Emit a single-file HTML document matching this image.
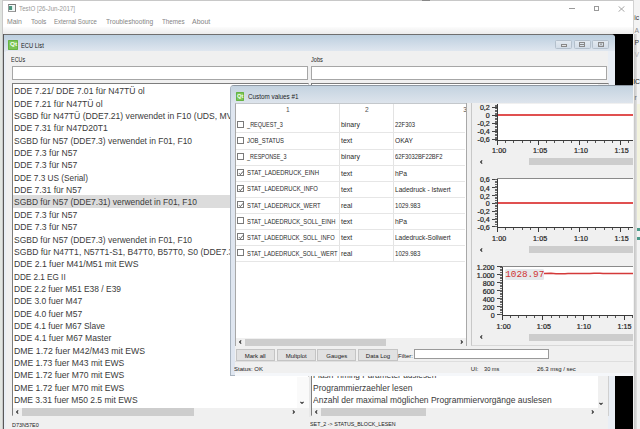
<!DOCTYPE html>
<html><head><meta charset="utf-8"><style>
html,body{margin:0;padding:0;}
body{width:640px;height:429px;overflow:hidden;position:relative;background:#fff;font-family:"Liberation Sans", sans-serif;}
.a{position:absolute;box-sizing:border-box;}
.t{position:absolute;white-space:pre;font-family:"Liberation Sans", sans-serif;}
</style></head><body>
<div class="a" style="left:0px;top:0px;width:640px;height:429px;background:#fff"></div>
<div class="a" style="left:0px;top:0px;width:640px;height:1px;background:#c8c8c8"></div>
<div class="a" style="left:422px;top:0px;width:8px;height:1px;background:#888"></div>
<div class="a" style="left:0px;top:0px;width:2px;height:429px;background:#e1e5e1"></div>
<div class="a" style="left:2px;top:0px;width:1px;height:429px;background:#c8c8c8"></div>
<div class="a" style="left:7.8px;top:4px;width:8px;height:7.5px;border:1px solid #9a9a9a;border-top:1.5px solid #777;border-right-color:#808080;background:#f4f8f8"></div>
<div class="a" style="left:8.9px;top:5.6px;width:3px;height:4.6px;background:#4a957e"></div>
<div class="a" style="left:11.9px;top:5.6px;width:2.4px;height:4.6px;background:linear-gradient(90deg,#d6efe8,#f4f8f8)"></div>
<div class="t" style="left:19.29px;top:5.84px;font-size:6.8px;line-height:6.8px;color:#999;transform:scaleX(0.9099);transform-origin:0.41px 0;">TestO [26-Jun-2017]</div>
<div class="a" style="left:568.8px;top:8px;width:6.2px;height:0.9px;background:#9a9a9a"></div>
<div class="a" style="left:593.8px;top:5.5px;width:5.6px;height:5.6px;border:0.9px solid #9a9a9a"></div>
<svg class="a" style="left:617.5px;top:5.5px" width="7" height="6" viewBox="0 0 7 6"><path d="M0.5 0.3L6.5 5.7M6.5 0.3L0.5 5.7" stroke="#9a9a9a" stroke-width="0.85"/></svg>
<div class="t" style="left:7.49px;top:19.44px;font-size:6.8px;line-height:6.8px;color:#858585;transform:scaleX(1.0130);transform-origin:0.41px 0;">Main</div>
<div class="t" style="left:30.59px;top:19.44px;font-size:6.8px;line-height:6.8px;color:#858585;transform:scaleX(0.9695);transform-origin:0.41px 0;">Tools</div>
<div class="t" style="left:54.39px;top:19.44px;font-size:6.8px;line-height:6.8px;color:#858585;transform:scaleX(0.8876);transform-origin:0.41px 0;">External Source</div>
<div class="t" style="left:105.79px;top:19.44px;font-size:6.8px;line-height:6.8px;color:#858585;transform:scaleX(0.9710);transform-origin:0.41px 0;">Troubleshooting</div>
<div class="t" style="left:161.59px;top:19.44px;font-size:6.8px;line-height:6.8px;color:#858585;transform:scaleX(0.9222);transform-origin:0.41px 0;">Themes</div>
<div class="t" style="left:192.49px;top:19.44px;font-size:6.8px;line-height:6.8px;color:#858585;transform:scaleX(1.0266);transform-origin:0.41px 0;">About</div>
<div class="a" style="left:3px;top:27px;width:631px;height:7px;background:linear-gradient(#fcfcfc,#ececec)"></div>
<div class="a" style="left:3px;top:34px;width:630px;height:395px;background:#000"></div>
<div class="a" style="left:3px;top:34px;width:611.5px;height:400px;background:#e9eef5;border-top:1px solid #6f6f6f;border-left:1px solid #585858;border-top-right-radius:4px"></div>
<div class="a" style="left:4px;top:35px;width:610.5px;height:16px;background:linear-gradient(#bccfdf,#dfe6ef);border-top-right-radius:3px"></div>
<div class="a" style="left:4px;top:50.5px;width:604px;height:1px;background:#e2e8f0"></div>
<div class="a" style="left:5.5px;top:51px;width:602px;height:378px;background:#f0f0f0"></div>
<div class="a" style="left:8.4px;top:40.4px;width:9.5px;height:9.2px;background:#7cc557;box-shadow:inset 0 0 0 0.8px #5fae3e;border-radius:1.2px"></div>
<div class="t" style="left:9.86px;top:42.26px;font-size:5.6px;line-height:5.6px;color:#f4fff0;transform:scaleX(1.1463);transform-origin:0.34px 0;font-weight:bold">Qt</div>
<div class="t" style="left:20.62px;top:42.78px;font-size:6.4px;line-height:6.4px;color:#1a1a1a;transform:scaleX(0.8998);transform-origin:0.38px 0;">ECU List</div>
<div class="a" style="left:555.3px;top:39.7px;width:16.8px;height:9px;border:1px solid #b4c0cc;border-radius:1.5px;background:linear-gradient(#e2e9f0,#d3dde8)"></div>
<div class="a" style="left:573.9px;top:39.7px;width:16.8px;height:9px;border:1px solid #b4c0cc;border-radius:1.5px;background:linear-gradient(#e2e9f0,#d3dde8)"></div>
<div class="a" style="left:592.3px;top:39.7px;width:16.8px;height:9px;border:1px solid #b4c0cc;border-radius:1.5px;background:linear-gradient(#e2e9f0,#d3dde8)"></div>
<div class="a" style="left:561px;top:44.2px;width:5.6px;height:2.4px;border:0.8px solid #888;background:#e4e4e4"></div>
<div class="a" style="left:579.2px;top:42.1px;width:5.8px;height:4.6px;border:0.8px solid #888"></div>
<div class="a" style="left:580px;top:44px;width:4.2px;height:0.7px;background:#888"></div>
<div class="a" style="left:597.5px;top:42.1px;width:6px;height:4.6px;border:0.8px solid #888"></div>
<svg class="a" style="left:597.5px;top:42.1px" width="6" height="4.6" viewBox="0 0 6 4.6"><path d="M1.5 1L4.5 3.6M4.5 1L1.5 3.6" stroke="#888" stroke-width="0.7"/></svg>
<div class="t" style="left:11.32px;top:57.38px;font-size:6.4px;line-height:6.4px;color:#1c1c1c;transform:scaleX(0.8409);transform-origin:0.38px 0;">ECUs</div>
<div class="t" style="left:310.62px;top:57.48px;font-size:6.4px;line-height:6.4px;color:#1c1c1c;transform:scaleX(0.8797);transform-origin:0.38px 0;">Jobs</div>
<div class="a" style="left:12px;top:66px;width:296px;height:13.7px;background:#fff;border:1px solid #a6a6a6"></div>
<div class="a" style="left:311px;top:66px;width:295.7px;height:13.7px;background:#fff;border:1px solid #a6a6a6"></div>
<div class="a" style="left:12px;top:83.3px;width:296.5px;height:333.2px;background:#fff;border:1px solid #7d7d7d;border-right-color:#d0d0d0;border-bottom-color:#d0d0d0"></div>
<div class="a" style="left:13px;top:194.8px;width:294px;height:13.2px;background:#dcdcdc"></div>
<div class="a" style="left:13px;top:84px;width:294px;height:324px;overflow:hidden">
<div class="t" style="left:1.44px;top:2.34px;font-size:9.4px;line-height:9.4px;color:#3a3a3a;transform:scaleX(0.9176);transform-origin:0.56px 0;">DDE 7.21/ DDE 7.01 für N47TÜ ol</div>
<div class="t" style="left:1.44px;top:14.69px;font-size:9.4px;line-height:9.4px;color:#3a3a3a;transform:scaleX(0.9184);transform-origin:0.56px 0;">DDE 7.21 für N47TÜ ol</div>
<div class="t" style="left:1.44px;top:27.04px;font-size:9.4px;line-height:9.4px;color:#3a3a3a;transform:scaleX(0.915);transform-origin:0.5px 0">SGBD für N47TÜ (DDE7.21) verwendet in F10 (UDS, MV</div>
<div class="t" style="left:1.44px;top:39.39px;font-size:9.4px;line-height:9.4px;color:#3a3a3a;transform:scaleX(0.9187);transform-origin:0.56px 0;">DDE 7.31 für N47D20T1</div>
<div class="t" style="left:1.44px;top:51.74px;font-size:9.4px;line-height:9.4px;color:#3a3a3a;transform:scaleX(0.9014);transform-origin:0.56px 0;">SGBD für N57 (DDE7.3) verwendet in F01, F10</div>
<div class="t" style="left:1.44px;top:64.09px;font-size:9.4px;line-height:9.4px;color:#3a3a3a;transform:scaleX(0.9209);transform-origin:0.56px 0;">DDE 7.3 für N57</div>
<div class="t" style="left:1.44px;top:76.44px;font-size:9.4px;line-height:9.4px;color:#3a3a3a;transform:scaleX(0.9209);transform-origin:0.56px 0;">DDE 7.3 für N57</div>
<div class="t" style="left:1.44px;top:88.79px;font-size:9.4px;line-height:9.4px;color:#3a3a3a;transform:scaleX(0.8808);transform-origin:0.56px 0;">DDE 7.3 US (Serial)</div>
<div class="t" style="left:1.44px;top:101.14px;font-size:9.4px;line-height:9.4px;color:#3a3a3a;transform:scaleX(0.9167);transform-origin:0.56px 0;">DDE 7.31 für N57</div>
<div class="t" style="left:1.44px;top:113.49px;font-size:9.4px;line-height:9.4px;color:#3a3a3a;transform:scaleX(0.9019);transform-origin:0.56px 0;">SGBD für N57 (DDE7.31) verwendet in F01, F10</div>
<div class="t" style="left:1.44px;top:125.84px;font-size:9.4px;line-height:9.4px;color:#3a3a3a;transform:scaleX(0.9209);transform-origin:0.56px 0;">DDE 7.3 für N57</div>
<div class="t" style="left:1.44px;top:138.19px;font-size:9.4px;line-height:9.4px;color:#3a3a3a;transform:scaleX(0.9209);transform-origin:0.56px 0;">DDE 7.3 für N57</div>
<div class="t" style="left:1.44px;top:150.54px;font-size:9.4px;line-height:9.4px;color:#3a3a3a;transform:scaleX(0.9014);transform-origin:0.56px 0;">SGBD für N57 (DDE7.3) verwendet in F01, F10</div>
<div class="t" style="left:1.44px;top:162.89px;font-size:9.4px;line-height:9.4px;color:#3a3a3a;transform:scaleX(0.915);transform-origin:0.5px 0">SGBD für N47T1, N57T1-S1, B47T0, B57T0, S0 (DDE7.3</div>
<div class="t" style="left:1.44px;top:175.24px;font-size:9.4px;line-height:9.4px;color:#3a3a3a;transform:scaleX(0.9222);transform-origin:0.56px 0;">DDE 2.1 fuer M41/M51 mit EWS</div>
<div class="t" style="left:1.44px;top:187.59px;font-size:9.4px;line-height:9.4px;color:#3a3a3a;transform:scaleX(0.8682);transform-origin:0.56px 0;">DDE 2.1 EG II</div>
<div class="t" style="left:1.44px;top:199.94px;font-size:9.4px;line-height:9.4px;color:#3a3a3a;transform:scaleX(0.9006);transform-origin:0.56px 0;">DDE 2.2 fuer M51 E38 / E39</div>
<div class="t" style="left:1.44px;top:212.29px;font-size:9.4px;line-height:9.4px;color:#3a3a3a;transform:scaleX(0.9078);transform-origin:0.56px 0;">DDE 3.0 fuer M47</div>
<div class="t" style="left:1.44px;top:224.64px;font-size:9.4px;line-height:9.4px;color:#3a3a3a;transform:scaleX(0.9078);transform-origin:0.56px 0;">DDE 4.0 fuer M57</div>
<div class="t" style="left:1.44px;top:236.99px;font-size:9.4px;line-height:9.4px;color:#3a3a3a;transform:scaleX(0.9003);transform-origin:0.56px 0;">DDE 4.1 fuer M67 Slave</div>
<div class="t" style="left:1.44px;top:249.34px;font-size:9.4px;line-height:9.4px;color:#3a3a3a;transform:scaleX(0.9152);transform-origin:0.56px 0;">DDE 4.1 fuer M67 Master</div>
<div class="t" style="left:1.44px;top:261.69px;font-size:9.4px;line-height:9.4px;color:#3a3a3a;transform:scaleX(0.9281);transform-origin:0.56px 0;">DME 1.72 fuer M42/M43 mit EWS</div>
<div class="t" style="left:1.44px;top:274.04px;font-size:9.4px;line-height:9.4px;color:#3a3a3a;transform:scaleX(0.9163);transform-origin:0.56px 0;">DME 1.73 fuer M43 mit EWS</div>
<div class="t" style="left:1.44px;top:286.39px;font-size:9.4px;line-height:9.4px;color:#3a3a3a;transform:scaleX(0.9163);transform-origin:0.56px 0;">DME 1.72 fuer M70 mit EWS</div>
<div class="t" style="left:1.44px;top:298.74px;font-size:9.4px;line-height:9.4px;color:#3a3a3a;transform:scaleX(0.9163);transform-origin:0.56px 0;">DME 1.72 fuer M70 mit EWS</div>
<div class="t" style="left:1.44px;top:311.09px;font-size:9.4px;line-height:9.4px;color:#3a3a3a;transform:scaleX(0.9084);transform-origin:0.56px 0;">DME 3.31 fuer M50 2.5 mit EWS</div>
</div>
<div class="a" style="left:13px;top:407.8px;width:284px;height:8.2px;background:#f0f0f0"></div>
<div class="a" style="left:22px;top:408px;width:172px;height:7.5px;background:#cdcdcd"></div>
<div class="a" style="left:297px;top:377px;width:12px;height:31px;background:#fafafa"></div>
<div class="a" style="left:309px;top:377px;width:2px;height:40px;background:#e8e8e8"></div>
<div class="a" style="left:297px;top:408px;width:12px;height:9px;background:#f0f0f0"></div>
<svg class="a" style="left:15.70px;top:410.20px" width="3" height="4" viewBox="0 0 3 4"><path d="M2.2 0.4L0.6 2L2.2 3.6" stroke="#333" stroke-width="1.1" fill="none"/></svg>
<svg class="a" style="left:291.80px;top:410.20px" width="3" height="4" viewBox="0 0 3 4"><path d="M0.8 0.4L2.4 2L0.8 3.6" stroke="#333" stroke-width="1.1" fill="none"/></svg>
<svg class="a" style="left:300.00px;top:401.00px" width="4" height="3" viewBox="0 0 4 3"><path d="M0.4 0.8L2 2.4L3.6 0.8" stroke="#333" stroke-width="1.1" fill="none"/></svg>
<div class="a" style="left:311px;top:83.3px;width:298px;height:333px;background:#fff;border:1px solid #7d7d7d;border-right-color:#d0d0d0;border-bottom-color:#d0d0d0"></div>
<div class="a" style="left:312px;top:84px;width:285.5px;height:323.5px;overflow:hidden">
<div class="t" style="left:1.14px;top:286.39px;font-size:9.4px;line-height:9.4px;color:#3a3a3a;transform:scaleX(0.8821);transform-origin:0.56px 0;">Flash Timing Parameter auslesen</div>
<div class="t" style="left:1.14px;top:298.74px;font-size:9.4px;line-height:9.4px;color:#3a3a3a;transform:scaleX(0.9033);transform-origin:0.56px 0;">Programmierzaehler lesen</div>
<div class="t" style="left:1.14px;top:311.09px;font-size:9.4px;line-height:9.4px;color:#3a3a3a;transform:scaleX(0.9050);transform-origin:0.56px 0;">Anzahl der maximal möglichen Programmiervorgänge auslesen</div>
</div>
<div class="a" style="left:312px;top:407.5px;width:285.5px;height:8.5px;background:#f0f0f0"></div>
<div class="a" style="left:321.3px;top:408px;width:104.7px;height:7.5px;background:#cdcdcd"></div>
<div class="a" style="left:597.5px;top:84px;width:10.5px;height:332px;background:#f0f0f0"></div>
<svg class="a" style="left:314.50px;top:410.20px" width="3" height="4" viewBox="0 0 3 4"><path d="M2.2 0.4L0.6 2L2.2 3.6" stroke="#333" stroke-width="1.1" fill="none"/></svg>
<svg class="a" style="left:590.50px;top:410.00px" width="3" height="4" viewBox="0 0 3 4"><path d="M0.8 0.4L2.4 2L0.8 3.6" stroke="#333" stroke-width="1.1" fill="none"/></svg>
<svg class="a" style="left:599.00px;top:401.50px" width="4" height="3" viewBox="0 0 4 3"><path d="M0.4 0.8L2 2.4L3.6 0.8" stroke="#333" stroke-width="1.1" fill="none"/></svg>
<div class="t" style="left:11.63px;top:421.55px;font-size:6.2px;line-height:6.2px;color:#1a1a1a;transform:scaleX(0.8802);transform-origin:0.37px 0;">D73N57E0</div>
<div class="t" style="left:309.93px;top:421.25px;font-size:6.2px;line-height:6.2px;color:#1a1a1a;transform:scaleX(0.8592);transform-origin:0.37px 0;">SET_2 -> STATUS_BLOCK_LESEN</div>
<div class="a" style="left:230px;top:84.6px;width:410px;height:291.9px;background:#dfe6f0;border:1px solid #a9b4c0;border-top-color:#8e98a2;border-top-left-radius:4px"></div>
<div class="a" style="left:231px;top:85.6px;width:402.5px;height:17.5px;background:linear-gradient(#c4d3e0,#dde4ec);border-top-left-radius:3px"></div>
<div class="a" style="left:235px;top:103px;width:398.5px;height:272.5px;background:#f0f0f0"></div>
<div class="a" style="left:235.8px;top:92px;width:8.4px;height:8.6px;background:#7cc557;box-shadow:inset 0 0 0 0.8px #5fae3e;border-radius:1.2px"></div>
<div class="t" style="left:237.09px;top:93.90px;font-size:5.2px;line-height:5.2px;color:#f4fff0;transform:scaleX(1.1110);transform-origin:0.31px 0;font-weight:bold">Qt</div>
<div class="t" style="left:247.50px;top:94.23px;font-size:6.7px;line-height:6.7px;color:#1c1c1c;transform:scaleX(0.9426);transform-origin:0.40px 0;">Custom values #1</div>
<div class="a" style="left:235.3px;top:103.3px;width:231.7px;height:243px;background:#fff;border:1px solid #a8a8a8;border-top-color:#c4c8cc"></div>
<div class="a" style="left:338.9px;top:104px;width:1px;height:157px;background:#e3e3e3"></div>
<div class="a" style="left:392.5px;top:104px;width:1px;height:157px;background:#e3e3e3"></div>
<div class="t" style="left:285.90px;top:107.41px;font-size:6.6px;line-height:6.6px;color:#505050;">1</div>
<div class="t" style="left:364.90px;top:107.41px;font-size:6.6px;line-height:6.6px;color:#505050;">2</div>
<div class="t" style="left:463.20px;top:107.41px;font-size:6.6px;line-height:6.6px;color:#505050;">3</div>
<div class="a" style="left:466px;top:103.3px;width:4.8px;height:243px;background:#f0f0f0;border-left:1px solid #a8a8a8"></div>
<div class="a" style="left:236px;top:132.48000000000002px;width:229px;height:1px;background:#e6e6e6"></div>
<div class="a" style="left:237.2px;top:120.80000000000001px;width:7px;height:7px;background:#fff;border:1px solid #7a7a7a"></div>
<div class="t" style="left:247.10px;top:122.13px;font-size:6.7px;line-height:6.7px;color:#2a2a2a;transform:scaleX(0.8244);transform-origin:0.40px 0;">_REQUEST_3</div>
<div class="t" style="left:341.11px;top:122.30px;font-size:6.5px;line-height:6.5px;color:#2a2a2a;transform:scaleX(1.0745);transform-origin:0.39px 0;">binary</div>
<div class="t" style="left:394.61px;top:122.30px;font-size:6.5px;line-height:6.5px;color:#2a2a2a;transform:scaleX(0.9028);transform-origin:0.39px 0;">22F303</div>
<div class="a" style="left:236px;top:148.56px;width:229px;height:1px;background:#e6e6e6"></div>
<div class="a" style="left:237.2px;top:136.88000000000002px;width:7px;height:7px;background:#fff;border:1px solid #7a7a7a"></div>
<div class="t" style="left:247.10px;top:138.21px;font-size:6.7px;line-height:6.7px;color:#2a2a2a;transform:scaleX(0.8761);transform-origin:0.40px 0;">JOB_STATUS</div>
<div class="t" style="left:341.11px;top:138.38px;font-size:6.5px;line-height:6.5px;color:#2a2a2a;transform:scaleX(1.0820);transform-origin:0.39px 0;">text</div>
<div class="t" style="left:394.61px;top:138.38px;font-size:6.5px;line-height:6.5px;color:#2a2a2a;transform:scaleX(1.0170);transform-origin:0.39px 0;">OKAY</div>
<div class="a" style="left:236px;top:164.64px;width:229px;height:1px;background:#e6e6e6"></div>
<div class="a" style="left:237.2px;top:152.96px;width:7px;height:7px;background:#fff;border:1px solid #7a7a7a"></div>
<div class="t" style="left:247.10px;top:154.29px;font-size:6.7px;line-height:6.7px;color:#2a2a2a;transform:scaleX(0.8143);transform-origin:0.40px 0;">_RESPONSE_3</div>
<div class="t" style="left:341.11px;top:154.46px;font-size:6.5px;line-height:6.5px;color:#2a2a2a;transform:scaleX(1.0745);transform-origin:0.39px 0;">binary</div>
<div class="t" style="left:394.61px;top:154.46px;font-size:6.5px;line-height:6.5px;color:#2a2a2a;transform:scaleX(0.8941);transform-origin:0.39px 0;">62F3032BF22BF2</div>
<div class="a" style="left:236px;top:180.71999999999997px;width:229px;height:1px;background:#e6e6e6"></div>
<div class="a" style="left:237.2px;top:169.04px;width:7px;height:7px;background:#fff;border:1px solid #7a7a7a"></div>
<svg class="a" style="left:237.7px;top:169.54px" width="6" height="6" viewBox="0 0 6 6"><path d="M1 3.2L2.4 4.6L5.1 1.3" stroke="#333" stroke-width="0.8" fill="none"/></svg>
<div class="t" style="left:247.10px;top:170.37px;font-size:6.7px;line-height:6.7px;color:#2a2a2a;transform:scaleX(0.8904);transform-origin:0.40px 0;">STAT_LADEDRUCK_EINH</div>
<div class="t" style="left:341.11px;top:170.54px;font-size:6.5px;line-height:6.5px;color:#2a2a2a;transform:scaleX(1.0820);transform-origin:0.39px 0;">text</div>
<div class="t" style="left:394.61px;top:170.54px;font-size:6.5px;line-height:6.5px;color:#2a2a2a;transform:scaleX(1.0372);transform-origin:0.39px 0;">hPa</div>
<div class="a" style="left:236px;top:196.8px;width:229px;height:1px;background:#e6e6e6"></div>
<div class="a" style="left:237.2px;top:185.12px;width:7px;height:7px;background:#fff;border:1px solid #7a7a7a"></div>
<svg class="a" style="left:237.7px;top:185.62px" width="6" height="6" viewBox="0 0 6 6"><path d="M1 3.2L2.4 4.6L5.1 1.3" stroke="#333" stroke-width="0.8" fill="none"/></svg>
<div class="t" style="left:247.10px;top:186.45px;font-size:6.7px;line-height:6.7px;color:#2a2a2a;transform:scaleX(0.8767);transform-origin:0.40px 0;">STAT_LADEDRUCK_INFO</div>
<div class="t" style="left:341.11px;top:186.62px;font-size:6.5px;line-height:6.5px;color:#2a2a2a;transform:scaleX(1.0820);transform-origin:0.39px 0;">text</div>
<div class="t" style="left:394.61px;top:186.62px;font-size:6.5px;line-height:6.5px;color:#2a2a2a;transform:scaleX(1.0073);transform-origin:0.39px 0;">Ladedruck - Istwert</div>
<div class="a" style="left:236px;top:212.88px;width:229px;height:1px;background:#e6e6e6"></div>
<div class="a" style="left:237.2px;top:201.20000000000002px;width:7px;height:7px;background:#fff;border:1px solid #7a7a7a"></div>
<svg class="a" style="left:237.7px;top:201.70px" width="6" height="6" viewBox="0 0 6 6"><path d="M1 3.2L2.4 4.6L5.1 1.3" stroke="#333" stroke-width="0.8" fill="none"/></svg>
<div class="t" style="left:247.10px;top:202.53px;font-size:6.7px;line-height:6.7px;color:#2a2a2a;transform:scaleX(0.8725);transform-origin:0.40px 0;">STAT_LADEDRUCK_WERT</div>
<div class="t" style="left:341.11px;top:202.70px;font-size:6.5px;line-height:6.5px;color:#2a2a2a;transform:scaleX(1.0433);transform-origin:0.39px 0;">real</div>
<div class="t" style="left:394.61px;top:202.70px;font-size:6.5px;line-height:6.5px;color:#2a2a2a;transform:scaleX(0.9300);transform-origin:0.39px 0;">1029.983</div>
<div class="a" style="left:236px;top:228.95999999999998px;width:229px;height:1px;background:#e6e6e6"></div>
<div class="a" style="left:237.2px;top:217.28px;width:7px;height:7px;background:#fff;border:1px solid #7a7a7a"></div>
<div class="t" style="left:247.10px;top:218.61px;font-size:6.7px;line-height:6.7px;color:#2a2a2a;transform:scaleX(0.8691);transform-origin:0.40px 0;">STAT_LADEDRUCK_SOLL_EINH</div>
<div class="t" style="left:341.11px;top:218.78px;font-size:6.5px;line-height:6.5px;color:#2a2a2a;transform:scaleX(1.0820);transform-origin:0.39px 0;">text</div>
<div class="t" style="left:394.61px;top:218.78px;font-size:6.5px;line-height:6.5px;color:#2a2a2a;transform:scaleX(1.0372);transform-origin:0.39px 0;">hPa</div>
<div class="a" style="left:236px;top:245.03999999999996px;width:229px;height:1px;background:#e6e6e6"></div>
<div class="a" style="left:237.2px;top:233.35999999999999px;width:7px;height:7px;background:#fff;border:1px solid #7a7a7a"></div>
<svg class="a" style="left:237.7px;top:233.86px" width="6" height="6" viewBox="0 0 6 6"><path d="M1 3.2L2.4 4.6L5.1 1.3" stroke="#333" stroke-width="0.8" fill="none"/></svg>
<div class="t" style="left:247.10px;top:234.69px;font-size:6.7px;line-height:6.7px;color:#2a2a2a;transform:scaleX(0.8623);transform-origin:0.40px 0;">STAT_LADEDRUCK_SOLL_INFO</div>
<div class="t" style="left:341.11px;top:234.86px;font-size:6.5px;line-height:6.5px;color:#2a2a2a;transform:scaleX(1.0820);transform-origin:0.39px 0;">text</div>
<div class="t" style="left:394.61px;top:234.86px;font-size:6.5px;line-height:6.5px;color:#2a2a2a;transform:scaleX(1.0007);transform-origin:0.39px 0;">Ladedruck-Sollwert</div>
<div class="a" style="left:236px;top:261.12px;width:229px;height:1px;background:#e6e6e6"></div>
<div class="a" style="left:237.2px;top:249.44px;width:7px;height:7px;background:#fff;border:1px solid #7a7a7a"></div>
<div class="t" style="left:247.10px;top:250.77px;font-size:6.7px;line-height:6.7px;color:#2a2a2a;transform:scaleX(0.8595);transform-origin:0.40px 0;">STAT_LADEDRUCK_SOLL_WERT</div>
<div class="t" style="left:341.11px;top:250.94px;font-size:6.5px;line-height:6.5px;color:#2a2a2a;transform:scaleX(1.0433);transform-origin:0.39px 0;">real</div>
<div class="t" style="left:394.61px;top:250.94px;font-size:6.5px;line-height:6.5px;color:#2a2a2a;transform:scaleX(0.9300);transform-origin:0.39px 0;">1029.983</div>
<div class="a" style="left:236px;top:338.2px;width:230px;height:8px;background:#f0f0f0"></div>
<div class="a" style="left:244.7px;top:338.5px;width:141.3px;height:7.5px;background:#cdcdcd"></div>
<svg class="a" style="left:238.50px;top:340.30px" width="3" height="4" viewBox="0 0 3 4"><path d="M2.2 0.4L0.6 2L2.2 3.6" stroke="#333" stroke-width="1.1" fill="none"/></svg>
<svg class="a" style="left:460.00px;top:340.20px" width="3" height="4" viewBox="0 0 3 4"><path d="M0.8 0.4L2.4 2L0.8 3.6" stroke="#333" stroke-width="1.1" fill="none"/></svg>
<div class="a" style="left:470.8px;top:103.4px;width:170px;height:243px;background:#f0f0f0;border-left:1px solid #c8c8c8;border-bottom:1px solid #d8d8d8"></div>
<div class="a" style="left:497.4px;top:104px;width:135.60000000000002px;height:36px;background:#fff"></div>
<div class="a" style="left:496.79999999999995px;top:104px;width:1px;height:36.6px;background:#3a3a3a"></div>
<div class="a" style="left:496.79999999999995px;top:140px;width:136.20000000000002px;height:1px;background:#3a3a3a"></div>
<div class="a" style="left:497.9px;top:114.45px;width:135.60000000000002px;height:1.1px;background:#e05050"></div>
<div class="a" style="left:492.4px;top:106.6px;width:5px;height:0.8px;background:#444"></div>
<div class="t" style="left:457.4px;top:105.34px;width:32.4px;text-align:right;font-size:7.1px;line-height:6.8px;color:#252525;font-weight:normal;-webkit-text-stroke:0.22px #252525">0,2</div>
<div class="a" style="left:492.4px;top:114.6px;width:5px;height:0.8px;background:#444"></div>
<div class="t" style="left:457.4px;top:113.34px;width:32.4px;text-align:right;font-size:7.1px;line-height:6.8px;color:#252525;font-weight:normal;-webkit-text-stroke:0.22px #252525">0</div>
<div class="a" style="left:492.4px;top:122.6px;width:5px;height:0.8px;background:#444"></div>
<div class="t" style="left:457.4px;top:121.34px;width:32.4px;text-align:right;font-size:7.1px;line-height:6.8px;color:#252525;font-weight:normal;-webkit-text-stroke:0.22px #252525">-0,2</div>
<div class="a" style="left:492.4px;top:130.6px;width:5px;height:0.8px;background:#444"></div>
<div class="t" style="left:457.4px;top:129.34px;width:32.4px;text-align:right;font-size:7.1px;line-height:6.8px;color:#252525;font-weight:normal;-webkit-text-stroke:0.22px #252525">-0,4</div>
<div class="a" style="left:492.4px;top:138.6px;width:5px;height:0.8px;background:#444"></div>
<div class="t" style="left:457.4px;top:137.34px;width:32.4px;text-align:right;font-size:7.1px;line-height:6.8px;color:#252525;font-weight:normal;-webkit-text-stroke:0.22px #252525">-0,6</div>
<div class="a" style="left:494.79999999999995px;top:104.8px;width:2.6px;height:0.55px;background:#666"></div>
<div class="a" style="left:494.79999999999995px;top:106.39999999999999px;width:2.6px;height:0.55px;background:#666"></div>
<div class="a" style="left:494.79999999999995px;top:107.99999999999999px;width:2.6px;height:0.55px;background:#666"></div>
<div class="a" style="left:494.79999999999995px;top:109.59999999999998px;width:2.6px;height:0.55px;background:#666"></div>
<div class="a" style="left:494.79999999999995px;top:111.19999999999997px;width:2.6px;height:0.55px;background:#666"></div>
<div class="a" style="left:494.79999999999995px;top:112.79999999999997px;width:2.6px;height:0.55px;background:#666"></div>
<div class="a" style="left:494.79999999999995px;top:114.39999999999996px;width:2.6px;height:0.55px;background:#666"></div>
<div class="a" style="left:494.79999999999995px;top:115.99999999999996px;width:2.6px;height:0.55px;background:#666"></div>
<div class="a" style="left:494.79999999999995px;top:117.59999999999995px;width:2.6px;height:0.55px;background:#666"></div>
<div class="a" style="left:494.79999999999995px;top:119.19999999999995px;width:2.6px;height:0.55px;background:#666"></div>
<div class="a" style="left:494.79999999999995px;top:120.79999999999994px;width:2.6px;height:0.55px;background:#666"></div>
<div class="a" style="left:494.79999999999995px;top:122.39999999999993px;width:2.6px;height:0.55px;background:#666"></div>
<div class="a" style="left:494.79999999999995px;top:123.99999999999993px;width:2.6px;height:0.55px;background:#666"></div>
<div class="a" style="left:494.79999999999995px;top:125.59999999999992px;width:2.6px;height:0.55px;background:#666"></div>
<div class="a" style="left:494.79999999999995px;top:127.19999999999992px;width:2.6px;height:0.55px;background:#666"></div>
<div class="a" style="left:494.79999999999995px;top:128.79999999999993px;width:2.6px;height:0.55px;background:#666"></div>
<div class="a" style="left:494.79999999999995px;top:130.39999999999992px;width:2.6px;height:0.55px;background:#666"></div>
<div class="a" style="left:494.79999999999995px;top:131.99999999999991px;width:2.6px;height:0.55px;background:#666"></div>
<div class="a" style="left:494.79999999999995px;top:133.5999999999999px;width:2.6px;height:0.55px;background:#666"></div>
<div class="a" style="left:494.79999999999995px;top:135.1999999999999px;width:2.6px;height:0.55px;background:#666"></div>
<div class="a" style="left:494.79999999999995px;top:136.7999999999999px;width:2.6px;height:0.55px;background:#666"></div>
<div class="a" style="left:494.79999999999995px;top:138.3999999999999px;width:2.6px;height:0.55px;background:#666"></div>
<div class="a" style="left:494.79999999999995px;top:139.9999999999999px;width:2.6px;height:0.55px;background:#666"></div>
<div class="a" style="left:496.9px;top:140.5px;width:0.9px;height:4px;background:#3a3a3a"></div>
<div class="a" style="left:505.2px;top:140.5px;width:0.8px;height:2px;background:#555"></div>
<div class="a" style="left:513.4px;top:140.5px;width:0.8px;height:2px;background:#555"></div>
<div class="a" style="left:521.6px;top:140.5px;width:0.8px;height:2px;background:#555"></div>
<div class="a" style="left:529.8px;top:140.5px;width:0.8px;height:2px;background:#555"></div>
<div class="t" style="left:484.20px;top:148.26px;width:30px;text-align:center;font-size:7.1px;line-height:6.9px;color:#252525;font-weight:normal;-webkit-text-stroke:0.22px #252525;letter-spacing:0.1px">1:00</div>
<div class="a" style="left:537.9px;top:140.5px;width:0.9px;height:4px;background:#3a3a3a"></div>
<div class="a" style="left:546.2px;top:140.5px;width:0.8px;height:2px;background:#555"></div>
<div class="a" style="left:554.4px;top:140.5px;width:0.8px;height:2px;background:#555"></div>
<div class="a" style="left:562.6px;top:140.5px;width:0.8px;height:2px;background:#555"></div>
<div class="a" style="left:570.8px;top:140.5px;width:0.8px;height:2px;background:#555"></div>
<div class="t" style="left:525.20px;top:148.26px;width:30px;text-align:center;font-size:7.1px;line-height:6.9px;color:#252525;font-weight:normal;-webkit-text-stroke:0.22px #252525;letter-spacing:0.1px">1:05</div>
<div class="a" style="left:578.9px;top:140.5px;width:0.9px;height:4px;background:#3a3a3a"></div>
<div class="a" style="left:587.2px;top:140.5px;width:0.8px;height:2px;background:#555"></div>
<div class="a" style="left:595.4px;top:140.5px;width:0.8px;height:2px;background:#555"></div>
<div class="a" style="left:603.6px;top:140.5px;width:0.8px;height:2px;background:#555"></div>
<div class="a" style="left:611.8px;top:140.5px;width:0.8px;height:2px;background:#555"></div>
<div class="t" style="left:566.00px;top:148.26px;width:30px;text-align:center;font-size:7.1px;line-height:6.9px;color:#252525;font-weight:normal;-webkit-text-stroke:0.22px #252525;letter-spacing:0.1px">1:10</div>
<div class="a" style="left:619.9px;top:140.5px;width:0.9px;height:4px;background:#3a3a3a"></div>
<div class="a" style="left:628.2px;top:140.5px;width:0.8px;height:2px;background:#555"></div>
<div class="t" style="left:606.70px;top:148.26px;width:30px;text-align:center;font-size:7.1px;line-height:6.9px;color:#252525;font-weight:normal;-webkit-text-stroke:0.22px #252525;letter-spacing:0.1px">1:15</div>
<div class="a" style="left:472.6px;top:157.6px;width:161px;height:8.3px;background:#f0f0f0"></div>
<div class="a" style="left:529px;top:158.1px;width:104px;height:7.4px;background:#cdcdcd"></div>
<svg class="a" style="left:480.00px;top:159.70px" width="3" height="4" viewBox="0 0 3 4"><path d="M2.2 0.4L0.6 2L2.2 3.6" stroke="#333" stroke-width="1.1" fill="none"/></svg>
<div class="a" style="left:497.4px;top:178.4px;width:135.60000000000002px;height:48.599999999999994px;background:#fff"></div>
<div class="a" style="left:496.79999999999995px;top:178.4px;width:1px;height:49.199999999999996px;background:#3a3a3a"></div>
<div class="a" style="left:496.79999999999995px;top:227px;width:136.20000000000002px;height:1px;background:#3a3a3a"></div>
<div class="a" style="left:497.4px;top:177.9px;width:135.60000000000002px;height:1px;background:#8a8a8a"></div>
<div class="a" style="left:497.9px;top:202.45px;width:135.60000000000002px;height:1.1px;background:#e05050"></div>
<div class="a" style="left:492.4px;top:178.6px;width:5px;height:0.8px;background:#444"></div>
<div class="t" style="left:457.4px;top:177.34px;width:32.4px;text-align:right;font-size:7.1px;line-height:6.8px;color:#252525;font-weight:normal;-webkit-text-stroke:0.22px #252525">0,6</div>
<div class="a" style="left:492.4px;top:186.79999999999998px;width:5px;height:0.8px;background:#444"></div>
<div class="t" style="left:457.4px;top:185.54px;width:32.4px;text-align:right;font-size:7.1px;line-height:6.8px;color:#252525;font-weight:normal;-webkit-text-stroke:0.22px #252525">0,4</div>
<div class="a" style="left:492.4px;top:194.9px;width:5px;height:0.8px;background:#444"></div>
<div class="t" style="left:457.4px;top:193.64px;width:32.4px;text-align:right;font-size:7.1px;line-height:6.8px;color:#252525;font-weight:normal;-webkit-text-stroke:0.22px #252525">0,2</div>
<div class="a" style="left:492.4px;top:202.6px;width:5px;height:0.8px;background:#444"></div>
<div class="t" style="left:457.4px;top:201.34px;width:32.4px;text-align:right;font-size:7.1px;line-height:6.8px;color:#252525;font-weight:normal;-webkit-text-stroke:0.22px #252525">0</div>
<div class="a" style="left:492.4px;top:210.6px;width:5px;height:0.8px;background:#444"></div>
<div class="t" style="left:457.4px;top:209.34px;width:32.4px;text-align:right;font-size:7.1px;line-height:6.8px;color:#252525;font-weight:normal;-webkit-text-stroke:0.22px #252525">-0,2</div>
<div class="a" style="left:492.4px;top:218.6px;width:5px;height:0.8px;background:#444"></div>
<div class="t" style="left:457.4px;top:217.34px;width:32.4px;text-align:right;font-size:7.1px;line-height:6.8px;color:#252525;font-weight:normal;-webkit-text-stroke:0.22px #252525">-0,4</div>
<div class="a" style="left:492.4px;top:226.2px;width:5px;height:0.8px;background:#444"></div>
<div class="t" style="left:457.4px;top:224.94px;width:32.4px;text-align:right;font-size:7.1px;line-height:6.8px;color:#252525;font-weight:normal;-webkit-text-stroke:0.22px #252525">-0,6</div>
<div class="a" style="left:494.79999999999995px;top:179.20000000000002px;width:2.6px;height:0.55px;background:#666"></div>
<div class="a" style="left:494.79999999999995px;top:180.8px;width:2.6px;height:0.55px;background:#666"></div>
<div class="a" style="left:494.79999999999995px;top:182.4px;width:2.6px;height:0.55px;background:#666"></div>
<div class="a" style="left:494.79999999999995px;top:184.0px;width:2.6px;height:0.55px;background:#666"></div>
<div class="a" style="left:494.79999999999995px;top:185.6px;width:2.6px;height:0.55px;background:#666"></div>
<div class="a" style="left:494.79999999999995px;top:187.2px;width:2.6px;height:0.55px;background:#666"></div>
<div class="a" style="left:494.79999999999995px;top:188.79999999999998px;width:2.6px;height:0.55px;background:#666"></div>
<div class="a" style="left:494.79999999999995px;top:190.39999999999998px;width:2.6px;height:0.55px;background:#666"></div>
<div class="a" style="left:494.79999999999995px;top:191.99999999999997px;width:2.6px;height:0.55px;background:#666"></div>
<div class="a" style="left:494.79999999999995px;top:193.59999999999997px;width:2.6px;height:0.55px;background:#666"></div>
<div class="a" style="left:494.79999999999995px;top:195.19999999999996px;width:2.6px;height:0.55px;background:#666"></div>
<div class="a" style="left:494.79999999999995px;top:196.79999999999995px;width:2.6px;height:0.55px;background:#666"></div>
<div class="a" style="left:494.79999999999995px;top:198.39999999999995px;width:2.6px;height:0.55px;background:#666"></div>
<div class="a" style="left:494.79999999999995px;top:199.99999999999994px;width:2.6px;height:0.55px;background:#666"></div>
<div class="a" style="left:494.79999999999995px;top:201.59999999999994px;width:2.6px;height:0.55px;background:#666"></div>
<div class="a" style="left:494.79999999999995px;top:203.19999999999993px;width:2.6px;height:0.55px;background:#666"></div>
<div class="a" style="left:494.79999999999995px;top:204.79999999999993px;width:2.6px;height:0.55px;background:#666"></div>
<div class="a" style="left:494.79999999999995px;top:206.39999999999992px;width:2.6px;height:0.55px;background:#666"></div>
<div class="a" style="left:494.79999999999995px;top:207.99999999999991px;width:2.6px;height:0.55px;background:#666"></div>
<div class="a" style="left:494.79999999999995px;top:209.5999999999999px;width:2.6px;height:0.55px;background:#666"></div>
<div class="a" style="left:494.79999999999995px;top:211.1999999999999px;width:2.6px;height:0.55px;background:#666"></div>
<div class="a" style="left:494.79999999999995px;top:212.7999999999999px;width:2.6px;height:0.55px;background:#666"></div>
<div class="a" style="left:494.79999999999995px;top:214.3999999999999px;width:2.6px;height:0.55px;background:#666"></div>
<div class="a" style="left:494.79999999999995px;top:215.9999999999999px;width:2.6px;height:0.55px;background:#666"></div>
<div class="a" style="left:494.79999999999995px;top:217.59999999999988px;width:2.6px;height:0.55px;background:#666"></div>
<div class="a" style="left:494.79999999999995px;top:219.19999999999987px;width:2.6px;height:0.55px;background:#666"></div>
<div class="a" style="left:494.79999999999995px;top:220.79999999999987px;width:2.6px;height:0.55px;background:#666"></div>
<div class="a" style="left:494.79999999999995px;top:222.39999999999986px;width:2.6px;height:0.55px;background:#666"></div>
<div class="a" style="left:494.79999999999995px;top:223.99999999999986px;width:2.6px;height:0.55px;background:#666"></div>
<div class="a" style="left:494.79999999999995px;top:225.59999999999985px;width:2.6px;height:0.55px;background:#666"></div>
<div class="a" style="left:496.9px;top:227.5px;width:0.9px;height:4px;background:#3a3a3a"></div>
<div class="a" style="left:505.2px;top:227.5px;width:0.8px;height:2px;background:#555"></div>
<div class="a" style="left:513.4px;top:227.5px;width:0.8px;height:2px;background:#555"></div>
<div class="a" style="left:521.6px;top:227.5px;width:0.8px;height:2px;background:#555"></div>
<div class="a" style="left:529.8px;top:227.5px;width:0.8px;height:2px;background:#555"></div>
<div class="t" style="left:484.20px;top:236.06px;width:30px;text-align:center;font-size:7.1px;line-height:6.9px;color:#252525;font-weight:normal;-webkit-text-stroke:0.22px #252525;letter-spacing:0.1px">1:00</div>
<div class="a" style="left:537.9px;top:227.5px;width:0.9px;height:4px;background:#3a3a3a"></div>
<div class="a" style="left:546.2px;top:227.5px;width:0.8px;height:2px;background:#555"></div>
<div class="a" style="left:554.4px;top:227.5px;width:0.8px;height:2px;background:#555"></div>
<div class="a" style="left:562.6px;top:227.5px;width:0.8px;height:2px;background:#555"></div>
<div class="a" style="left:570.8px;top:227.5px;width:0.8px;height:2px;background:#555"></div>
<div class="t" style="left:525.20px;top:236.06px;width:30px;text-align:center;font-size:7.1px;line-height:6.9px;color:#252525;font-weight:normal;-webkit-text-stroke:0.22px #252525;letter-spacing:0.1px">1:05</div>
<div class="a" style="left:578.9px;top:227.5px;width:0.9px;height:4px;background:#3a3a3a"></div>
<div class="a" style="left:587.2px;top:227.5px;width:0.8px;height:2px;background:#555"></div>
<div class="a" style="left:595.4px;top:227.5px;width:0.8px;height:2px;background:#555"></div>
<div class="a" style="left:603.6px;top:227.5px;width:0.8px;height:2px;background:#555"></div>
<div class="a" style="left:611.8px;top:227.5px;width:0.8px;height:2px;background:#555"></div>
<div class="t" style="left:566.00px;top:236.06px;width:30px;text-align:center;font-size:7.1px;line-height:6.9px;color:#252525;font-weight:normal;-webkit-text-stroke:0.22px #252525;letter-spacing:0.1px">1:10</div>
<div class="a" style="left:619.9px;top:227.5px;width:0.9px;height:4px;background:#3a3a3a"></div>
<div class="a" style="left:628.2px;top:227.5px;width:0.8px;height:2px;background:#555"></div>
<div class="t" style="left:606.70px;top:236.06px;width:30px;text-align:center;font-size:7.1px;line-height:6.9px;color:#252525;font-weight:normal;-webkit-text-stroke:0.22px #252525;letter-spacing:0.1px">1:15</div>
<div class="a" style="left:472.6px;top:245.4px;width:161px;height:8.3px;background:#f0f0f0"></div>
<div class="a" style="left:529px;top:245.9px;width:104px;height:7.4px;background:#cdcdcd"></div>
<svg class="a" style="left:480.00px;top:247.50px" width="3" height="4" viewBox="0 0 3 4"><path d="M2.2 0.4L0.6 2L2.2 3.6" stroke="#333" stroke-width="1.1" fill="none"/></svg>
<div class="a" style="left:502.2px;top:266.4px;width:130.8px;height:48.80000000000001px;background:#fff"></div>
<div class="a" style="left:501.59999999999997px;top:266.4px;width:1px;height:49.40000000000001px;background:#3a3a3a"></div>
<div class="a" style="left:501.59999999999997px;top:315.2px;width:131.4px;height:1px;background:#3a3a3a"></div>
<div class="a" style="left:502.2px;top:265.9px;width:130.8px;height:1px;background:#8a8a8a"></div>
<div class="a" style="left:502.7px;top:273.25px;width:130.8px;height:1.1px;background:#e05050"></div>
<div class="a" style="left:497.2px;top:266.40000000000003px;width:5px;height:0.8px;background:#444"></div>
<div class="t" style="left:462.2px;top:265.14px;width:32.4px;text-align:right;font-size:7.1px;line-height:6.8px;color:#252525;font-weight:normal;-webkit-text-stroke:0.22px #252525">1.200</div>
<div class="a" style="left:497.2px;top:274.40000000000003px;width:5px;height:0.8px;background:#444"></div>
<div class="t" style="left:462.2px;top:273.14px;width:32.4px;text-align:right;font-size:7.1px;line-height:6.8px;color:#252525;font-weight:normal;-webkit-text-stroke:0.22px #252525">1.000</div>
<div class="a" style="left:497.2px;top:282.40000000000003px;width:5px;height:0.8px;background:#444"></div>
<div class="t" style="left:462.2px;top:281.14px;width:32.4px;text-align:right;font-size:7.1px;line-height:6.8px;color:#252525;font-weight:normal;-webkit-text-stroke:0.22px #252525">800</div>
<div class="a" style="left:497.2px;top:290.40000000000003px;width:5px;height:0.8px;background:#444"></div>
<div class="t" style="left:462.2px;top:289.14px;width:32.4px;text-align:right;font-size:7.1px;line-height:6.8px;color:#252525;font-weight:normal;-webkit-text-stroke:0.22px #252525">600</div>
<div class="a" style="left:497.2px;top:298.40000000000003px;width:5px;height:0.8px;background:#444"></div>
<div class="t" style="left:462.2px;top:297.14px;width:32.4px;text-align:right;font-size:7.1px;line-height:6.8px;color:#252525;font-weight:normal;-webkit-text-stroke:0.22px #252525">400</div>
<div class="a" style="left:497.2px;top:306.40000000000003px;width:5px;height:0.8px;background:#444"></div>
<div class="t" style="left:462.2px;top:305.14px;width:32.4px;text-align:right;font-size:7.1px;line-height:6.8px;color:#252525;font-weight:normal;-webkit-text-stroke:0.22px #252525">200</div>
<div class="a" style="left:497.2px;top:314.40000000000003px;width:5px;height:0.8px;background:#444"></div>
<div class="t" style="left:462.2px;top:313.14px;width:32.4px;text-align:right;font-size:7.1px;line-height:6.8px;color:#252525;font-weight:normal;-webkit-text-stroke:0.22px #252525">0</div>
<div class="a" style="left:499.59999999999997px;top:267.2px;width:2.6px;height:0.55px;background:#666"></div>
<div class="a" style="left:499.59999999999997px;top:268.8px;width:2.6px;height:0.55px;background:#666"></div>
<div class="a" style="left:499.59999999999997px;top:270.40000000000003px;width:2.6px;height:0.55px;background:#666"></div>
<div class="a" style="left:499.59999999999997px;top:272.00000000000006px;width:2.6px;height:0.55px;background:#666"></div>
<div class="a" style="left:499.59999999999997px;top:273.6000000000001px;width:2.6px;height:0.55px;background:#666"></div>
<div class="a" style="left:499.59999999999997px;top:275.2000000000001px;width:2.6px;height:0.55px;background:#666"></div>
<div class="a" style="left:499.59999999999997px;top:276.8000000000001px;width:2.6px;height:0.55px;background:#666"></div>
<div class="a" style="left:499.59999999999997px;top:278.40000000000015px;width:2.6px;height:0.55px;background:#666"></div>
<div class="a" style="left:499.59999999999997px;top:280.00000000000017px;width:2.6px;height:0.55px;background:#666"></div>
<div class="a" style="left:499.59999999999997px;top:281.6000000000002px;width:2.6px;height:0.55px;background:#666"></div>
<div class="a" style="left:499.59999999999997px;top:283.2000000000002px;width:2.6px;height:0.55px;background:#666"></div>
<div class="a" style="left:499.59999999999997px;top:284.80000000000024px;width:2.6px;height:0.55px;background:#666"></div>
<div class="a" style="left:499.59999999999997px;top:286.40000000000026px;width:2.6px;height:0.55px;background:#666"></div>
<div class="a" style="left:499.59999999999997px;top:288.0000000000003px;width:2.6px;height:0.55px;background:#666"></div>
<div class="a" style="left:499.59999999999997px;top:289.6000000000003px;width:2.6px;height:0.55px;background:#666"></div>
<div class="a" style="left:499.59999999999997px;top:291.20000000000033px;width:2.6px;height:0.55px;background:#666"></div>
<div class="a" style="left:499.59999999999997px;top:292.80000000000035px;width:2.6px;height:0.55px;background:#666"></div>
<div class="a" style="left:499.59999999999997px;top:294.4000000000004px;width:2.6px;height:0.55px;background:#666"></div>
<div class="a" style="left:499.59999999999997px;top:296.0000000000004px;width:2.6px;height:0.55px;background:#666"></div>
<div class="a" style="left:499.59999999999997px;top:297.6000000000004px;width:2.6px;height:0.55px;background:#666"></div>
<div class="a" style="left:499.59999999999997px;top:299.20000000000044px;width:2.6px;height:0.55px;background:#666"></div>
<div class="a" style="left:499.59999999999997px;top:300.80000000000047px;width:2.6px;height:0.55px;background:#666"></div>
<div class="a" style="left:499.59999999999997px;top:302.4000000000005px;width:2.6px;height:0.55px;background:#666"></div>
<div class="a" style="left:499.59999999999997px;top:304.0000000000005px;width:2.6px;height:0.55px;background:#666"></div>
<div class="a" style="left:499.59999999999997px;top:305.60000000000053px;width:2.6px;height:0.55px;background:#666"></div>
<div class="a" style="left:499.59999999999997px;top:307.20000000000056px;width:2.6px;height:0.55px;background:#666"></div>
<div class="a" style="left:499.59999999999997px;top:308.8000000000006px;width:2.6px;height:0.55px;background:#666"></div>
<div class="a" style="left:499.59999999999997px;top:310.4000000000006px;width:2.6px;height:0.55px;background:#666"></div>
<div class="a" style="left:499.59999999999997px;top:312.0000000000006px;width:2.6px;height:0.55px;background:#666"></div>
<div class="a" style="left:499.59999999999997px;top:313.60000000000065px;width:2.6px;height:0.55px;background:#666"></div>
<div class="a" style="left:501.7px;top:315.7px;width:0.9px;height:4px;background:#3a3a3a"></div>
<div class="a" style="left:509.92px;top:315.7px;width:0.8px;height:2px;background:#555"></div>
<div class="a" style="left:518.04px;top:315.7px;width:0.8px;height:2px;background:#555"></div>
<div class="a" style="left:526.16px;top:315.7px;width:0.8px;height:2px;background:#555"></div>
<div class="a" style="left:534.28px;top:315.7px;width:0.8px;height:2px;background:#555"></div>
<div class="t" style="left:488.70px;top:323.66px;width:30px;text-align:center;font-size:7.1px;line-height:6.9px;color:#252525;font-weight:normal;-webkit-text-stroke:0.22px #252525;letter-spacing:0.1px">1:00</div>
<div class="a" style="left:542.3px;top:315.7px;width:0.9px;height:4px;background:#3a3a3a"></div>
<div class="a" style="left:550.52px;top:315.7px;width:0.8px;height:2px;background:#555"></div>
<div class="a" style="left:558.64px;top:315.7px;width:0.8px;height:2px;background:#555"></div>
<div class="a" style="left:566.76px;top:315.7px;width:0.8px;height:2px;background:#555"></div>
<div class="a" style="left:574.88px;top:315.7px;width:0.8px;height:2px;background:#555"></div>
<div class="t" style="left:528.90px;top:323.66px;width:30px;text-align:center;font-size:7.1px;line-height:6.9px;color:#252525;font-weight:normal;-webkit-text-stroke:0.22px #252525;letter-spacing:0.1px">1:05</div>
<div class="a" style="left:582.9px;top:315.7px;width:0.9px;height:4px;background:#3a3a3a"></div>
<div class="a" style="left:591.12px;top:315.7px;width:0.8px;height:2px;background:#555"></div>
<div class="a" style="left:599.24px;top:315.7px;width:0.8px;height:2px;background:#555"></div>
<div class="a" style="left:607.36px;top:315.7px;width:0.8px;height:2px;background:#555"></div>
<div class="a" style="left:615.48px;top:315.7px;width:0.8px;height:2px;background:#555"></div>
<div class="t" style="left:568.90px;top:323.66px;width:30px;text-align:center;font-size:7.1px;line-height:6.9px;color:#252525;font-weight:normal;-webkit-text-stroke:0.22px #252525;letter-spacing:0.1px">1:10</div>
<div class="a" style="left:623.5px;top:315.7px;width:0.9px;height:4px;background:#3a3a3a"></div>
<div class="a" style="left:631.72px;top:315.7px;width:0.8px;height:2px;background:#555"></div>
<div class="t" style="left:609.50px;top:323.66px;width:30px;text-align:center;font-size:7.1px;line-height:6.9px;color:#252525;font-weight:normal;-webkit-text-stroke:0.22px #252525;letter-spacing:0.1px">1:15</div>
<div class="a" style="left:472.6px;top:333.3px;width:161px;height:8.3px;background:#f0f0f0"></div>
<div class="a" style="left:529px;top:333.8px;width:104px;height:7.4px;background:#cdcdcd"></div>
<svg class="a" style="left:480.00px;top:335.40px" width="3" height="4" viewBox="0 0 3 4"><path d="M2.2 0.4L0.6 2L2.2 3.6" stroke="#333" stroke-width="1.1" fill="none"/></svg>
<div class="a" style="left:502.5px;top:272.8px;width:131px;height:1.4px;background:#fff"></div>
<svg class="a" style="left:0;top:0" width="640" height="429" viewBox="0 0 640 429"><path d="M506.0 273.50 L544.0 273.50 L551.0 273.30 L556.0 273.80 L565.0 273.80 L568.0 273.50 L590.0 273.50 L594.0 273.20 L600.0 273.20 L603.0 273.50 L633.0 273.50" stroke="#d43a3a" stroke-width="1.4" fill="none"/></svg>
<div class="a" style="left:505.3px;top:269px;width:39px;height:11px;background:#e5e8eb;border-radius:1.5px"></div>
<div class="t" style="left:505.24px;top:269.94px;font-size:9.4px;line-height:9.4px;color:#d03434;font-family:'Liberation Mono',monospace;letter-spacing:-0.05px;font-weight:normal">1028.97</div>
<div class="a" style="left:235.7px;top:349px;width:39.0px;height:11.6px;background:#e1e1e1;border:1px solid #c4c4c4"></div>
<div class="t" style="left:235.7px;top:351.5px;width:39.0px;text-align:center;font-size:6px;line-height:8px;color:#1a1a1a">Mark all</div>
<div class="a" style="left:276.6px;top:349px;width:39.39999999999998px;height:11.6px;background:#e1e1e1;border:1px solid #c4c4c4"></div>
<div class="t" style="left:276.6px;top:351.5px;width:39.39999999999998px;text-align:center;font-size:6px;line-height:8px;color:#1a1a1a">Multplot</div>
<div class="a" style="left:317.3px;top:349px;width:39.099999999999966px;height:11.6px;background:#e1e1e1;border:1px solid #c4c4c4"></div>
<div class="t" style="left:317.3px;top:351.5px;width:39.099999999999966px;text-align:center;font-size:6px;line-height:8px;color:#1a1a1a">Gauges</div>
<div class="a" style="left:358px;top:349px;width:40px;height:11.6px;background:#e1e1e1;border:1px solid #c4c4c4"></div>
<div class="t" style="left:358px;top:351.5px;width:40px;text-align:center;font-size:6px;line-height:8px;color:#1a1a1a">Data Log</div>
<div class="t" style="left:397.94px;top:352.92px;font-size:6px;line-height:6px;color:#1a1a1a;transform:scaleX(1.0014);transform-origin:0.36px 0;">Filter:</div>
<div class="a" style="left:414.4px;top:349.3px;width:134.2px;height:10.2px;background:#fff;border:1px solid #9a9a9a"></div>
<div class="a" style="left:235px;top:361px;width:398px;height:0.8px;background:#dedede"></div>
<div class="a" style="left:235px;top:372.5px;width:398px;height:3px;background:#f5f7fa"></div>
<div class="t" style="left:234.44px;top:366.22px;font-size:6px;line-height:6px;color:#1a1a1a;transform:scaleX(0.9966);transform-origin:0.36px 0;">Status: OK</div>
<div class="t" style="left:470.84px;top:366.02px;font-size:6px;line-height:6px;color:#1a1a1a;">UI:</div>
<div class="t" style="left:484.34px;top:366.02px;font-size:6px;line-height:6px;color:#1a1a1a;transform:scaleX(0.9345);transform-origin:0.36px 0;">30 ms</div>
<div class="t" style="left:536.84px;top:366.02px;font-size:6px;line-height:6px;color:#1a1a1a;transform:scaleX(0.9919);transform-origin:0.36px 0;">26.3 msg / sec</div>
<div class="a" style="left:633px;top:0px;width:7px;height:429px;background:#f3f3f3"></div>
<div class="a" style="left:633.5px;top:34px;width:3.5px;height:395px;background:linear-gradient(90deg,#c4c4c4,#e2e2e2)"></div>
<div class="a" style="left:633px;top:0px;width:1px;height:34px;background:#d2d2d2"></div>
<div class="a" style="left:637px;top:104px;width:3px;height:116px;background:#f3f3de"></div>
<div class="a" style="left:636.5px;top:227.5px;width:3.5px;height:3px;background:#4a9a8a"></div>
<div class="a" style="left:636.5px;top:236.5px;width:3.5px;height:3px;background:#4a9a8a"></div>
<div class="t" style="left:634.19px;top:14.74px;font-size:6.8px;line-height:6.8px;color:#333;">ic</div>
<div class="t" style="left:634.39px;top:28.24px;font-size:6.8px;line-height:6.8px;color:#888;">A</div>
<div class="t" style="left:634.39px;top:40.24px;font-size:6.8px;line-height:6.8px;color:#333;">P</div>
<div class="t" style="left:634.39px;top:52.24px;font-size:6.8px;line-height:6.8px;color:#b0b0b0;">V</div>
<div class="t" style="left:633.19px;top:78.74px;font-size:6.8px;line-height:6.8px;color:#222;">IC</div>
<div class="t" style="left:634.59px;top:95.24px;font-size:6.8px;line-height:6.8px;color:#666;">r</div>
</body></html>
